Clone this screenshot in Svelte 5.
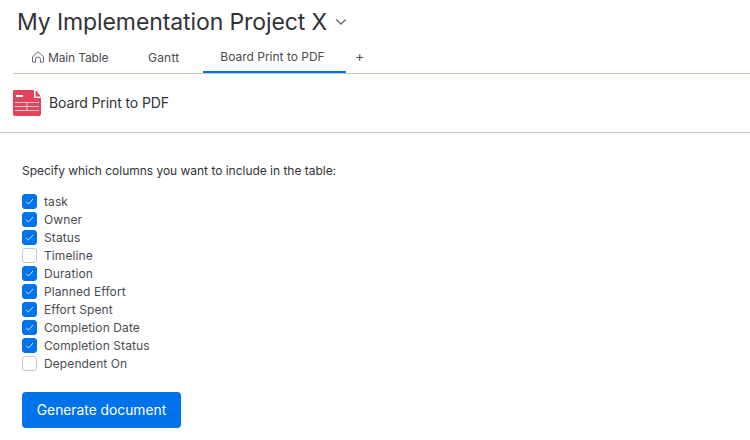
<script>
  const columns = [
    { name: 'task', on: true },
    { name: 'Owner', on: true },
    { name: 'Status', on: true },
    { name: 'Timeline', on: false },
    { name: 'Duration', on: true },
    { name: 'Planned Effort', on: true },
    { name: 'Effort Spent', on: true },
    { name: 'Completion Date', on: true },
    { name: 'Completion Status', on: true },
    { name: 'Dependent On', on: false }
  ];
</script>

<div class="page">
  <header class="top">
    <div class="title-row">
      <h1>My Implementation Project X</h1>
      <svg class="chev" width="12" height="8" viewBox="0 0 12 8" fill="none"><path d="M1.200 1.500 6 6l4.800-4.500" stroke="#676879" stroke-width="1.300"/></svg>
    </div>
    <nav class="tabs">
      <div class="tab main">
        <svg width="14" height="14" viewBox="0 0 14 14" fill="none"><path d="M1.500 6.600 7 1.800l5.500 4.800v5.100a.5.5 0 0 1-.5.500H9.500V9.500a2.500 2.500 0 0 0-5 0v2.700H2a.5.5 0 0 1-.5-.5z" stroke="#676879" stroke-width="1"/></svg>
        <span>Main Table</span>
      </div>
      <div class="tab gantt">Gantt</div>
      <div class="tab active">Board Print to PDF</div>
      <div class="tab plus">+</div>
    </nav>
  </header>

  <section class="app-head">
    <svg width="28" height="26" viewBox="0 0 28 26">
      <path d="M1 0h20v8h7v16a2 2 0 0 1-2 2H2a2 2 0 0 1-2-2V1a1 1 0 0 1 1-1z" fill="#e2445c"/>
      <path d="M22.500 0 28 6.500h-5.500z" fill="#e2445c"/>
      <rect x="3" y="5" width="7" height="2" fill="#fff"/>
      <path d="M2 12.500h24M2 16.500h24M2 20.500h24M14 12.500v8" stroke="#f7c2ca" stroke-width="1"/>
    </svg>
    <span>Board Print to PDF</span>
  </section>

  <main class="body">
    <p>Specify which columns you want to include in the table:</p>
    <ul>
      {#each columns as c}
        <li>
          <span class="box" class:on={c.on}>
            {#if c.on}
              <svg width="15" height="15" viewBox="0 0 15 15" fill="none"><path d="M4 7.700 6.500 10 11 5" stroke="#cfe3ff" stroke-width="1"/></svg>
            {/if}
          </span>
          <span class="name">{c.name}</span>
        </li>
      {/each}
    </ul>
    <button>Generate document</button>
  </main>
</div>

<style>
  :global(body) { margin: 0; background: #fff; }
  .page { width: 750px; height: 440px; overflow: hidden; font-family: "Inter", "Liberation Sans", sans-serif; color: #323338; font-size: 12px; }
  .top { padding-left: 13px; }
  .title-row { display: flex; align-items: center; height: 44px; padding-left: 4px; gap: 8px; }
  h1 { margin: 0; font: 400 23px/30px "Inter", sans-serif; letter-spacing: -0.1px; color: #323338; }
  .tabs { display: flex; height: 29px; border-bottom: 1px solid #c5c7d8; }
  .tab { display: flex; align-items: center; height: 26px; box-sizing: border-box; color: #4b4c52; }
  .main { margin-left: 18px; gap: 3px; width: 117px; letter-spacing: -0.15px; }
  .gantt { width: 55px; letter-spacing: 0.2px; }
  .active { width: 143px; justify-content: center; height: 29px; padding: 0 4px 3px 0; border-bottom: 2px solid #0073ea; margin-bottom: -1px; }
  .plus { margin-left: 9px; font-size: 14px; height: 22px; }
  .app-head { display: flex; align-items: center; gap: 8px; height: 58px; padding-left: 13px; border-bottom: 1px solid #c5c7d8; font-size: 14px; font-weight: 400; letter-spacing: -0.1px; }
  .app-head span { padding-bottom: 2px; }
  .body { padding: 30px 22px 0; }
  p { margin: 0 0 13px; line-height: 16px; color: #323338; letter-spacing: -0.02px; }
  ul { list-style: none; margin: 0; padding: 0; }
  li { display: flex; align-items: center; gap: 7px; height: 18px; color: #4b4c52; }
  .name { letter-spacing: 0.1px; }
  .box { display: flex; box-sizing: border-box; width: 15px; height: 15px; border: 1px solid #c5c7d8; border-radius: 3px; }
  .box.on { background: #0073ea; border-color: #0073ea; }
  .box svg { margin: -1px; }
  button { display: block; margin-top: 20px; width: 159px; height: 36px; border: 0; border-radius: 4px; background: #0073ea; color: #fff; font: 400 13.800px "Inter", sans-serif; }
</style>
